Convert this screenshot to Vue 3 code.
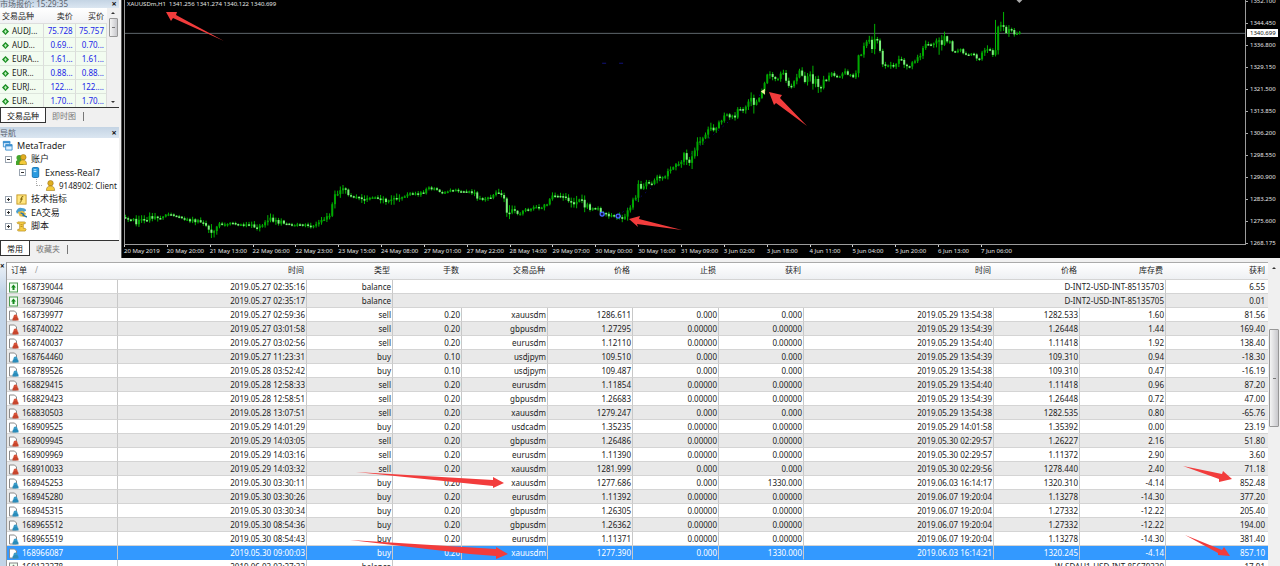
<script setup>
const quotes = [
  ['AUDJ...', '75.728', '75.757'],
  ['AUD...', '0.69...', '0.70...'],
  ['EURA...', '1.61...', '1.61...'],
  ['EUR...', '0.88...', '0.88...'],
  ['EURJ...', '122....', '122....'],
  ['EUR...', '1.70...', '1.70...'],
]

const tree = [
  { label: 'MetaTrader', icon: 'app', level: 0 },
  { label: '账户', icon: 'users', level: 1, box: '-' },
  { label: 'Exness-Real7', icon: 'server', level: 2, box: '-' },
  { label: '9148902: Client', icon: 'user', level: 3 },
  { label: '技术指标', icon: 'func', level: 1, box: '+' },
  { label: 'EA交易', icon: 'ea', level: 1, box: '+' },
  { label: '脚本', icon: 'script', level: 1, box: '+' },
]

const prices = ['1352.100', '1344.450', '1336.800', '1329.150', '1321.500', '1313.850', '1306.200', '1298.550', '1290.900', '1283.250', '1275.600', '1268.175']
const times = ['20 May 2019', '20 May 20:00', '21 May 13:00', '22 May 06:00', '22 May 23:00', '23 May 15:00', '24 May 08:00', '27 May 01:00', '27 May 22:00', '28 May 14:00', '29 May 07:00', '30 May 00:00', '30 May 16:00', '31 May 09:00', '3 Jun 02:00', '3 Jun 18:00', '4 Jun 11:00', '5 Jun 04:00', '5 Jun 20:00', '6 Jun 13:00', '7 Jun 06:00']

// Price curve: x, y and the typical wick length around that point.
const curve = [
  [124, 218, 2], [130, 221, 2], [137, 223, 3], [142, 219, 3], [150, 218, 3], [154, 216, 3], [158, 219, 2], [164, 215, 1], [172, 216, 1], [180, 219, 1], [188, 221, 1], [196, 222, 3], [203, 222, 2], [206, 231, 3], [212, 234, 5], [215, 226, 3], [222, 226, 2], [230, 224, 1], [240, 226, 1], [250, 227, 2], [257, 226, 3], [264, 224, 2], [268, 220, 3], [274, 223, 3], [280, 222, 2], [288, 226, 1], [296, 226, 1], [304, 226, 1], [309, 229, 2], [316, 225, 2], [322, 221, 2], [330, 216, 3], [332, 200, 3], [338, 191, 3], [345, 192, 3], [351, 197, 2], [364, 199, 3], [372, 197, 2], [380, 198, 3], [386, 203, 2], [393, 202, 4], [402, 196, 2], [410, 195, 1], [424, 194, 2], [426, 188, 1], [434, 190, 1], [442, 193, 1], [452, 191, 1], [464, 193, 1], [473, 192, 2], [476, 199, 2], [485, 200, 1], [490, 199, 2], [496, 195, 3], [503, 198, 2], [506, 212, 4], [511, 212, 4], [518, 215, 1], [526, 210, 1], [534, 209, 2], [544, 207, 2], [549, 201, 3], [554, 196, 3], [562, 198, 3], [570, 201, 4], [578, 202, 5], [585, 206, 4], [590, 210, 1], [598, 209, 1], [602, 214, 2], [612, 216, 2], [620, 219, 3], [625, 218, 2], [628, 212, 3], [631, 205, 2], [635, 200, 3], [637, 188, 5], [644, 185, 2], [654, 184, 2], [656, 177, 2], [664, 176, 3], [672, 170, 2], [680, 164, 3], [683, 156, 3], [690, 159, 5], [694, 158, 5], [696, 145, 5], [702, 138, 3], [708, 133, 4], [716, 127, 3], [724, 117, 2], [732, 116, 2], [736, 121, 3], [738, 108, 2], [744, 109, 2], [750, 100, 4], [756, 105, 5], [760, 94, 3], [764, 91, 2], [765, 77, 3], [770, 77, 3], [778, 79, 1], [782, 73, 3], [786, 80, 2], [790, 87, 2], [795, 83, 2], [800, 70, 3], [804, 81, 3], [808, 75, 3], [814, 82, 6], [820, 89, 4], [826, 80, 3], [832, 74, 2], [838, 78, 1], [844, 73, 2], [856, 77, 2], [858, 54, 3], [862, 57, 2], [866, 42, 3], [870, 38, 3], [873, 50, 3], [876, 32, 5], [879, 44, 2], [883, 66, 4], [888, 67, 3], [896, 67, 2], [898, 56, 3], [902, 62, 2], [907, 67, 3], [914, 61, 2], [921, 57, 2], [924, 46, 3], [932, 44, 1], [938, 44, 4], [944, 41, 5], [950, 39, 2], [953, 52, 2], [960, 49, 1], [966, 55, 1], [974, 54, 1], [980, 60, 2], [984, 49, 2], [990, 50, 3], [994, 56, 1], [997, 46, 2], [998, 32, 6], [1003, 23, 6], [1006, 34, 3], [1010, 28, 3], [1014, 33, 2], [1020, 33, 1],
]
const spikes = { 1003: [12, 30], 875: [24, 40], 997: [20, 40], 814: [66, 90], 637: [181, 195], 754: [95, 114], 211: [225, 239], 939: [44, 55], 268: [216, 224], 510: [206, 220] }

function sample(x) {
  let i = 1
  while (i < curve.length - 1 && curve[i][0] < x) i++
  const [x0, y0, v0] = curve[i - 1]
  const [x1, y1, v1] = curve[i]
  const t = Math.min(1, Math.max(0, (x - x0) / (x1 - x0)))
  return [y0 + (y1 - y0) * t, v0 + (v1 - v0) * t]
}
const noise = n => {
  const s = Math.sin(n * 127.1 + 11.7) * 43758.5453
  return s - Math.floor(s)
}

const candles = []
const step = 2.69
let previous = 218
for (let n = 0; n < 334; n++) {
  const x = 124.5 + n * step
  const [y, v] = sample(x)
  const close = y + (noise(n) - 0.5) * v * 2
  const spike = Object.entries(spikes).find(([k]) => Math.abs(k - x) <= step / 2)
  let high = Math.min(previous, close) - 0.5 - noise(n + 500) * v * 1.3
  let low = Math.max(previous, close) + 0.5 + noise(n + 900) * v * 1.3
  if (spike) {
    high = Math.min(high, spike[1][0])
    low = Math.max(low, spike[1][1])
  }
  candles.push({ x: x - 124, top: Math.min(previous, close), size: Math.max(1.5, Math.abs(close - previous)), high, low, fall: close > previous })
  previous = close
}

const B = '2019.05.'
const orders = [
  ['in', '168739044', B + '27 02:35:16', 'balance', 'D-INT2-USD-INT-85135703', '6.55'],
  ['in', '168739046', B + '27 02:35:17', 'balance', 'D-INT2-USD-INT-85135705', '0.01'],
  ['sell', '168739977', B + '27 02:59:36', 'sell', '0.20', 'xauusdm', '1286.611', '0.000', '0.000', B + '29 13:54:38', '1282.533', '1.60', '81.56'],
  ['sell', '168740022', B + '27 03:01:58', 'sell', '0.20', 'gbpusdm', '1.27295', '0.00000', '0.00000', B + '29 13:54:39', '1.26448', '1.44', '169.40'],
  ['sell', '168740037', B + '27 03:02:56', 'sell', '0.20', 'eurusdm', '1.12110', '0.00000', '0.00000', B + '29 13:54:40', '1.11418', '1.92', '138.40'],
  ['buy', '168764460', B + '27 11:23:31', 'buy', '0.10', 'usdjpym', '109.510', '0.000', '0.000', B + '29 13:54:39', '109.310', '0.94', '-18.30'],
  ['buy', '168789526', B + '28 03:52:42', 'buy', '0.10', 'usdjpym', '109.487', '0.000', '0.000', B + '29 13:54:38', '109.310', '0.47', '-16.19'],
  ['sell', '168829415', B + '28 12:58:33', 'sell', '0.20', 'eurusdm', '1.11854', '0.00000', '0.00000', B + '29 13:54:40', '1.11418', '0.96', '87.20'],
  ['sell', '168829423', B + '28 12:58:51', 'sell', '0.20', 'gbpusdm', '1.26683', '0.00000', '0.00000', B + '29 13:54:39', '1.26448', '0.72', '47.00'],
  ['sell', '168830503', B + '28 13:07:51', 'sell', '0.20', 'xauusdm', '1279.247', '0.000', '0.000', B + '29 13:54:38', '1282.535', '0.80', '-65.76'],
  ['buy', '168909525', B + '29 14:01:29', 'buy', '0.20', 'usdcadm', '1.35235', '0.00000', '0.00000', B + '29 14:01:58', '1.35392', '0.00', '23.19'],
  ['sell', '168909945', B + '29 14:03:05', 'sell', '0.20', 'gbpusdm', '1.26486', '0.00000', '0.00000', B + '30 02:29:57', '1.26227', '2.16', '51.80'],
  ['sell', '168909969', B + '29 14:03:16', 'sell', '0.20', 'eurusdm', '1.11390', '0.00000', '0.00000', B + '30 02:29:57', '1.11372', '2.90', '3.60'],
  ['sell', '168910033', B + '29 14:03:32', 'sell', '0.20', 'xauusdm', '1281.999', '0.000', '0.000', B + '30 02:29:56', '1278.440', '2.40', '71.18'],
  ['buy', '168945253', B + '30 03:30:11', 'buy', '0.20', 'xauusdm', '1277.686', '0.000', '1330.000', '2019.06.03 16:14:17', '1320.310', '-4.14', '852.48'],
  ['buy', '168945280', B + '30 03:30:26', 'buy', '0.20', 'eurusdm', '1.11392', '0.00000', '0.00000', '2019.06.07 19:20:04', '1.13278', '-14.30', '377.20'],
  ['buy', '168945315', B + '30 03:30:34', 'buy', '0.20', 'gbpusdm', '1.26305', '0.00000', '0.00000', '2019.06.07 19:20:04', '1.27332', '-12.22', '205.40'],
  ['buy', '168965512', B + '30 08:54:36', 'buy', '0.20', 'gbpusdm', '1.26362', '0.00000', '0.00000', '2019.06.07 19:20:04', '1.27332', '-12.22', '194.00'],
  ['buy', '168965519', B + '30 08:54:43', 'buy', '0.20', 'eurusdm', '1.11371', '0.00000', '0.00000', '2019.06.07 19:20:04', '1.13278', '-14.30', '381.40'],
  ['buy', '168966087', B + '30 09:00:03', 'buy', '0.20', 'xauusdm', '1277.390', '0.000', '1330.000', '2019.06.03 16:14:21', '1320.245', '-4.14', '857.10'],
  ['out', '169133378', '2019.06.03 03:27:33', 'balance', 'W-SDAU1-USD-INT-85679339', '17.91'],
]
const heads = ['时间', '类型', '手数', '交易品种', '价格', '止损', '获利', '时间', '价格', '库存费', '获利']

const arrows = [
  '166,12 177,12 176,15 224,41 173,18 171,21',
  '629,219 640,216 639,219 682,230 637,224 638,227',
  '769,92 782,95 780,98 807,126 776,103 774,105',
  '356,472 493,480 493,477 504,483 493,488 493,486 473,484',
  '350,540 496,549 496,547 508,554 496,559 496,556 470,554',
  '1183,466 1222,474 1223,471 1232,479 1219,482 1219,479',
  '1185,535 1222,550 1224,547 1230,556 1218,555 1218,553',
]
</script>

<template>
  <div class="terminal">
    <div class="upper">
      <aside class="side">
        <section class="watch">
          <header class="caption watch-caption"><span>市场报价: 15:29:35</span><button class="close" aria-label="关闭">×</button></header>
          <div class="watch-body">
            <table class="quotes">
              <colgroup><col class="q1"><col class="q2"><col class="q3"></colgroup>
              <thead><tr><th>交易品种</th><th>卖价</th><th>买价</th></tr></thead>
              <tbody>
                <tr v-for="(q, i) in quotes" :key="i">
                  <td><svg class="up" viewBox="0 0 8 8"><path d="M4 0 8 4 4 8 0 4Z" fill="#168a1e" /><path d="M4 2 6 4.3H4.8V6H3.2V4.3H2Z" fill="#b5f0b5" /></svg>{{ q[0] }}</td>
                  <td>{{ q[1] }}</td>
                  <td>{{ q[2] }}</td>
                </tr>
              </tbody>
            </table>
            <div class="bar"><i class="tri-up"></i><i class="thumb"></i><i class="tri-down"></i></div>
          </div>
          <nav class="tabs"><button class="tab on">交易品种</button><button class="tab">即时图</button></nav>
        </section>
        <section class="navigator">
          <header class="caption"><span>导航</span><button class="close" aria-label="关闭">×</button></header>
          <ul class="tree">
            <li v-for="t in tree" :key="t.label" :class="'level' + t.level">
              <span v-if="t.box" class="box"><svg viewBox="0 0 5 5"><path :d="t.box === '+' ? 'M1 2.5h3M2.5 1v3' : 'M1 2.5h3'" stroke="#333" /></svg></span>
              <span v-if="t.level === 3" class="branch"></span>
              <svg class="node" viewBox="0 0 12 12">
                <g v-if="t.icon === 'app'" fill="#dff0ff" stroke="#3b8fd0"><path d="M1.5 1.5h7v6h-7z" /><path d="M1 2.5h8" stroke-width="2" /><path d="M4 5h7v6H4z" /><path d="M4 6h7" stroke-width="2" /></g>
                <g v-else-if="t.icon === 'users'"><circle cx="3.500" cy="4" r="3" fill="#45a52d" /><path d="M0 12V8q1-2 4-2 3 0 4 3v3z" fill="#45a52d" /><circle cx="8" cy="3.5" r="3" fill="#dfae20" stroke="#986d10" stroke-width=".6" /><path d="M3.5 11.5q0-5 4-5 4 0 4 5z" fill="#f3cb3a" stroke="#986d10" stroke-width=".6" /></g>
                <g v-else-if="t.icon === 'server'"><rect x="2.5" y=".5" width="7" height="11" rx="1.5" fill="#2a9be0" stroke="#1372b4" /><path d="M4 3h3M4 5h3" stroke="#d5f1ff" /></g>
                <g v-else-if="t.icon === 'user'"><circle cx="6" cy="3.5" r="3" fill="#dfae20" stroke="#986d10" stroke-width=".6" /><path d="M1.5 11.5q0-5 4.500-5 4.500 0 4.500 5z" fill="#f3cb3a" stroke="#986d10" stroke-width=".6" /></g>
                <g v-else-if="t.icon === 'func'"><rect x="1" y="1" width="10" height="10" fill="#ffe680" stroke="#c49720" /><path d="M8 3q-2-1-2 1.500L5.500 8q-.3 1.500-1.500 1M4.500 5.500h3" fill="none" stroke="#775a00" /></g>
                <g v-else-if="t.icon === 'ea'"><path d="M0 5q2-5 6-4 5 0 5 3L7 6 1 7z" fill="#4a9fd0" /><path d="M2 5.500 7 4l4 3-2 4-5-1z" fill="#e6bd45" /><path d="M5 6.500 9 8M7 8.500 12 11" stroke="#2874a8" stroke-width="1.500" /></g>
                <g v-else><path d="M2 1h7q2 0 1 2H8v5h2q2 1 0 3H3q-2 0-1-2h2V3H2Q0 2 2 1z" fill="#f6cc43" stroke="#b18719" stroke-width=".7" /><path d="M5 4h2M5 6h2" stroke="#9c7410" stroke-width=".7" /></g>
              </svg>
              <span class="name">{{ t.label }}</span>
            </li>
          </ul>
          <nav class="tabs"><button class="tab on">常用</button><button class="tab">收藏夹</button></nav>
        </section>
      </aside>

      <main class="chart">
        <div class="plot">
          <svg class="candles" viewBox="0 0 1122 245" preserveAspectRatio="none">
            <path d="M0 33.500H1122" stroke="#5d656b" />
            <path d="M494 217 641 91" stroke="#1010a0" stroke-dasharray="1 5" />
            <path d="M478 63.500h4M495 63.500h4" stroke="#12127a" />
            <g v-for="(c, i) in candles" :key="i">
              <rect :x="c.x - 0.5" :y="c.high" width="1" :height="c.low - c.high" fill="#00b400" />
              <rect :x="c.x - 1" :y="c.top" width="2" :height="c.size" :fill="c.fall ? '#7cf07c' : '#00a800'" />
            </g>
            <g fill="#10104a" stroke="#4a68ff" stroke-width="1.300"><circle cx="478" cy="215" r="2" /><circle cx="494" cy="217" r="2" /></g>
            <path d="M637 92 641 89V95Z" fill="#f4efa0" />
            <path d="M893 0h6l-3 3z" fill="#aaa" />
          </svg>
          <p class="ohlc">XAUUSDm,H1&nbsp; 1341.256 1341.274 1340.122 1340.699</p>
        </div>
        <div class="price-axis">
          <ol><li v-for="p in prices" :key="p">{{ p }}</li></ol>
          <output class="last">1340.699</output>
        </div>
        <ol class="time-axis"><li v-for="t in times" :key="t">{{ t }}</li></ol>
      </main>
    </div>

    <section class="history">
      <div class="strip"><button class="close" aria-label="关闭">×</button></div>
      <div class="grid-wrap">
        <table class="orders">
          <colgroup><col v-for="n in 12" :key="n" :class="'c' + n"></colgroup>
          <thead><tr><th>订单 <i class="sort">/</i></th><th v-for="(h, i) in heads" :key="i">{{ h }}</th></tr></thead>
          <tbody>
            <tr v-for="o in orders" :key="o[1]" :class="{ picked: o[1] === '168966087' }">
              <td>
                <svg class="doc" viewBox="0 0 11 11">
                  <g v-if="o[0] === 'in' || o[0] === 'out'"><rect x="1.500" y="1" width="8" height="9" fill="#f0fff0" :stroke="o[0] === 'in' ? '#4c9a50' : '#888'" /><path d="M5.500 2.500 8 5.500H6.500V8h-2V5.500H3Z" :fill="o[0] === 'in' ? '#168a1e' : '#777'" /></g>
                  <g v-else><path d="M1.500 1h5l2 2v7h-7z" fill="#fff" stroke="#8a8a8a" /><circle cx="7.500" cy="6.500" r="2" :fill="o[0] === 'sell' ? '#d8533a' : '#3a9cc8'" /><path d="M4.500 10.500V9q0-2 2-2h2q2 0 2 2v1.500z" :fill="o[0] === 'sell' ? '#c8452c' : '#2a8cba'" /></g>
                </svg>{{ o[1] }}
              </td>
              <td v-for="(c, i) in o.slice(2)" :key="i" :colspan="o.length === 6 && i === 2 ? 8 : 1">{{ c }}</td>
            </tr>
          </tbody>
        </table>
      </div>
      <div class="bar tall"><i class="tri-up"></i><i class="thumb"></i></div>
    </section>

    <svg class="arrows" viewBox="0 0 1280 566" preserveAspectRatio="none"><polygon v-for="a in arrows" :key="a" :points="a" /></svg>
  </div>
</template>

<style>
body { margin: 0; overflow: hidden; }
</style>

<style scoped>
.terminal { position: relative; display: flex; flex-direction: column; height: 100vh; overflow: hidden; background: #f0f0f0; color: #1c1c1c; font-family: "Noto Sans", "Noto Sans CJK SC", sans-serif; font-size: 8px; }
button { margin: 0; padding: 0; border: 0; background: none; font: inherit; color: inherit; }
ol, ul, p { margin: 0; padding: 0; list-style: none; }
table { border-collapse: separate; border-spacing: 0; table-layout: fixed; }
th { font-weight: 400; }
th, td { padding: 0; white-space: nowrap; overflow: hidden; box-sizing: border-box; }

.upper { display: flex; flex: 0 0 258px; }
.side { flex: 0 0 122px; box-sizing: border-box; padding-right: 2px; border-right: 1px solid #555; display: flex; flex-direction: column; gap: 4px; background: #f0f0f0; overflow: hidden; }
.watch { flex: 0 0 123px; display: flex; flex-direction: column; }
.caption { display: flex; justify-content: space-between; align-items: center; height: 11px; padding-right: 2px; line-height: 11px; color: #5b6470; background: linear-gradient(#c4d4e4, #dbe6f1); font-size: 8px; white-space: nowrap; }
.watch-caption { height: 8px; line-height: 8px; }
.close { width: 6px; font-size: 9px; line-height: 8px; font-weight: 700; color: #111; }
.watch-body { display: flex; height: 100px; background: #fff; border-bottom: 1px solid #333; box-sizing: border-box; overflow: hidden; }
.quotes { flex: 1; width: 0; }
.q1 { width: 44px; } .q2, .q3 { width: 31px; }
.quotes th { height: 16px; text-align: right; padding-right: 3px; background: linear-gradient(#fff, #f1f2f4); border-bottom: 1px solid #ddd; }
.quotes th:first-child { text-align: left; padding-left: 2px; }
.quotes td { height: 14px; text-align: right; padding-right: 2px; color: #2026e8; background: #f2fcf0; border-right: 1px solid #dcdcdc; border-bottom: 1px solid #dde5dc; }
.quotes td:first-child { text-align: left; padding-right: 0; color: #1c1c1c; line-height: 12px; }
.up { width: 7px; height: 7px; margin: 0 3px 0 2px; vertical-align: -1px; }
.bar { display: flex; flex-direction: column; align-items: center; flex: 0 0 12px; background: #f0f0f0; padding: 4px 0; box-sizing: border-box; gap: 4px; }
.tri-up, .tri-down { border: 2px solid transparent; }
.tri-up { border-bottom-color: #333; border-top: 0; }
.tri-down { border-top-color: #333; border-bottom: 0; margin-top: auto; }
.thumb { width: 9px; height: 19px; box-sizing: border-box; border: 1px solid #979797; border-radius: 1px; background: linear-gradient(#777, #777) center / 3px 1px no-repeat, linear-gradient(90deg, #f4f4f4, #c8c8cc); }
.tabs { display: flex; height: 15px; }
.tab { padding: 0 6px; color: #777; position: relative; }
.tab:last-child::after { content: ""; position: absolute; right: 0; top: 4px; height: 9px; border-right: 1px solid #777; }
.tab:last-child { padding-right: 8px; }
.tab.on { background: #fff; color: #111; border: 1px solid #333; border-top: 0; }
.navigator { flex: 1; display: flex; flex-direction: column; overflow: hidden; }
.tree { flex: 0 0 103px; box-sizing: border-box; padding: 1px 0 7px; display: grid; grid-template-rows: repeat(7, 1fr); background: #fff; border-bottom: 1px solid #333; overflow: hidden; }
.tree li { display: flex; align-items: center; gap: 4px; white-space: nowrap; font-size: 9px; line-height: 12px; }
.node { width: 11px; height: 11px; flex: none; }
.level0 { padding-left: 2px; }
.level1 { padding-left: 5px; }
.level2 { padding-left: 19px; }
.level3 { padding-left: 36px; }
.tree .level3 { gap: 3px; }
.level3 .name { font-size: 8px; }
.branch { flex: none; width: 5px; height: 6px; margin-top: -6px; border: dotted #aaa; border-width: 0 0 1px 1px; }
.box { flex: none; width: 5px; height: 5px; border: 1px solid #9aa4b0; background: #fff; }
.box svg { display: block; width: 5px; height: 5px; }

.chart { flex: 1; min-width: 0; display: grid; grid-template-columns: 1fr 34px; grid-template-rows: 245px 13px; padding-left: 2px; background: #000; color: #e4e4e4; font-size: 6px; }
.plot { position: relative; border: solid #9c9c9c; border-width: 0 1px 1px; overflow: hidden; }
.candles { display: block; width: 100%; height: 100%; }
.ohlc { position: absolute; left: 2px; top: 0; line-height: 9px; white-space: nowrap; }
.price-axis { position: relative; overflow: hidden; }
.price-axis ol { margin-top: -10px; }
.price-axis li { height: 22px; line-height: 22px; padding-left: 4px; background: linear-gradient(#aaa, #aaa) 0 11px / 2px 1px no-repeat; }
.last { position: absolute; left: 1px; right: 2px; top: 29px; height: 8px; line-height: 8px; padding-left: 3px; background: #fff; color: #111; }
.time-axis { grid-column: 1; display: grid; grid-template-columns: repeat(26, 1fr); padding-right: 8px; line-height: 12px; white-space: nowrap; }
.time-axis li { background: linear-gradient(#ccc, #ccc) 0 0 / 1px 2px no-repeat; }

.history { flex: 1; min-height: 0; display: flex; margin-top: 4px; background: #fff; }
.strip { flex: 0 0 6px; border-right: 1px solid #999; background: linear-gradient(#eef3f8, #c3d5e8 30px); }
.strip .close { display: block; width: 4px; font-size: 8px; }
.grid-wrap { flex: 1; min-width: 0; overflow: hidden; }
.orders { width: 100%; border-top: 1px solid #aaa; }
.c1 { width: 111px; } .c2 { width: 189px; } .c3 { width: 86px; } .c4 { width: 69px; } .c5 { width: 86px; } .c6 { width: 85px; } .c7 { width: 86px; } .c8 { width: 85px; } .c9 { width: 190px; } .c10 { width: 86px; } .c11 { width: 86px; } .c12 { width: 102px; }
.orders th { height: 17px; line-height: 12px; text-align: right; padding: 0 3px 2px 0; background: linear-gradient(#fff, #eef0f3); border-bottom: 1px solid #d4d4d4; }
.orders th:first-child { text-align: left; padding-left: 4px; }
.sort { margin-left: 6px; color: #999; font-style: normal; }
.orders td { height: 14px; line-height: 13px; text-align: right; padding-right: 1px; border-right: 1px solid #c8c8c8; border-bottom: 1px solid #d4d4d4; }
.orders td:last-child { border-right: 0; padding-right: 3px; }
.orders td:first-child { text-align: left; padding-left: 1px; }
.orders tbody tr:nth-child(even) { background: #e9e9e9; }
.orders tbody tr.picked { background: #3399ff; color: #fff; }
.picked td { border-bottom-color: #3399ff; }
.doc { width: 11px; height: 11px; margin-right: 3px; vertical-align: -3px; }
.tall { gap: 60px; padding-top: 5px; }
.tall .thumb { height: 98px; width: 10px; }
.arrows { position: absolute; inset: 0; width: 100%; height: 100%; fill: #f23c3c; pointer-events: none; }
</style>
